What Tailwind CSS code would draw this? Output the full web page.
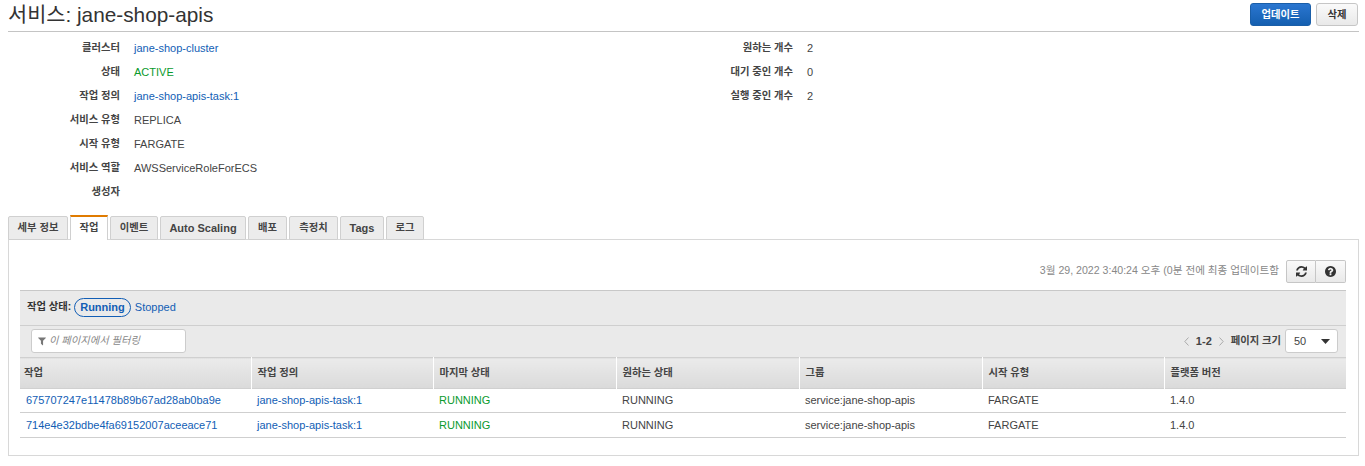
<!DOCTYPE html>
<html>
<head>
    <title>서비스: jane-shop-apis</title>
    <script src="https://cdn.jsdelivr.net/npm/@tailwindcss/browser@4"></script>
</head>
<body class="bg-white text-[#444] text-[11px] h-[466px] overflow-hidden font-['Liberation_Sans','Noto_Sans_CJK_KR',sans-serif]">
    <div class="pl-2 pr-[6px]">
        <!-- header -->
        <div class="h-[32px] flex items-center justify-between border-b border-[#c4c4c4]">
            <h1 class="text-[20.800px] leading-[30px] text-[#333] pb-[2px]">서비스: jane-shop-apis</h1>
            <div class="flex gap-[5px] pr-[1px] pb-[2px]">
                <button class="w-[61px] h-[23px] rounded-[3px] border border-[#1a5ea8] bg-gradient-to-b from-[#2a76d0] to-[#145fb0] text-white font-bold text-[10.300px]">업데이트</button>
                <button class="w-[42px] h-[23px] rounded-[3px] border border-[#c6c6c6] bg-gradient-to-b from-[#fafafa] to-[#e9e9e9] text-[#333] font-bold text-[10.300px]">삭제</button>
            </div>
        </div>

        <!-- service details -->
        <div class="grid grid-cols-[799px_1fr] pt-[4px] h-[183px]">
            <dl class="grid grid-cols-[112px_1fr] auto-rows-[24px] gap-x-[14px] items-center w-[500px]">
                <dt class="text-right font-bold text-[10.300px]">클러스터</dt><dd class="text-[#125eb5]">jane-shop-cluster</dd>
                <dt class="text-right font-bold text-[10.300px]">상태</dt><dd class="text-[#0a9a2d]">ACTIVE</dd>
                <dt class="text-right font-bold text-[10.300px]">작업 정의</dt><dd class="text-[#125eb5]">jane-shop-apis-task:1</dd>
                <dt class="text-right font-bold text-[10.300px]">서비스 유형</dt><dd>REPLICA</dd>
                <dt class="text-right font-bold text-[10.300px]">시작 유형</dt><dd>FARGATE</dd>
                <dt class="text-right font-bold text-[10.300px]">서비스 역할</dt><dd>AWSServiceRoleForECS</dd>
                <dt class="text-right font-bold text-[10.300px]">생성자</dt><dd></dd>
            </dl>
            <dl class="grid grid-cols-[86px_1fr] auto-rows-[24px] gap-x-[14px] items-center -ml-[100px] self-start">
                <dt class="text-right font-bold text-[10.300px] whitespace-nowrap">원하는 개수</dt><dd>2</dd>
                <dt class="text-right font-bold text-[10.300px] whitespace-nowrap">대기 중인 개수</dt><dd>0</dd>
                <dt class="text-right font-bold text-[10.300px] whitespace-nowrap">실행 중인 개수</dt><dd>2</dd>
            </dl>
        </div>

        <!-- tabs -->
        <div class="flex h-[25px] gap-[2px] items-end relative z-10 text-[10.300px] font-bold">
            <div class="w-[60px] h-[24px] flex items-center justify-center bg-[#ececec] border border-[#d0d0d0] rounded-t-[2px]">세부 정보</div>
            <div class="w-[38px] h-[25px] flex items-center justify-center bg-white border-x border-[#d0d0d0] border-t-2 border-t-[#e07b00] pb-[2px]">작업</div>
            <div class="w-[48px] h-[24px] flex items-center justify-center bg-[#ececec] border border-[#d0d0d0] rounded-t-[2px]">이벤트</div>
            <div class="w-[86px] h-[24px] flex items-center justify-center bg-[#ececec] border border-[#d0d0d0] rounded-t-[2px] text-[11px]">Auto Scaling</div>
            <div class="w-[39px] h-[24px] flex items-center justify-center bg-[#ececec] border border-[#d0d0d0] rounded-t-[2px]">배포</div>
            <div class="w-[49px] h-[24px] flex items-center justify-center bg-[#ececec] border border-[#d0d0d0] rounded-t-[2px]">측정치</div>
            <div class="w-[44px] h-[24px] flex items-center justify-center bg-[#ececec] border border-[#d0d0d0] rounded-t-[2px] text-[11px]">Tags</div>
            <div class="w-[38px] h-[24px] flex items-center justify-center bg-[#ececec] border border-[#d0d0d0] rounded-t-[2px]">로그</div>
        </div>

        <!-- panel -->
        <div class="h-[217px] -mt-px border border-[#d8d8d8] pl-[11px] pr-[12px]">
            <div class="h-[50px] flex items-center justify-end gap-[7px] pt-[12px]">
                <span class="text-[#888] text-[10.600px]">3월 29, 2022 3:40:24 오후 (0분 전에 최종 업데이트함</span>
                <div class="flex h-[23px]">
                    <button class="w-[30px] border border-[#c6c6c6] rounded-l-[2px] bg-gradient-to-b from-[#fafafa] to-[#e9e9e9] flex items-center justify-center">
                        <svg width="11" height="13" viewBox="0 0 1536 1792" fill="#333"><path d="M1511 1056q0 5-1 7-64 268-268 434.500t-478 166.500q-146 0-282.500-55t-243.500-157l-129 129q-19 19-45 19t-45-19-19-45v-448q0-26 19-45t45-19h448q26 0 45 19t19 45-19 45l-137 137q71 66 161 102t187 36q134 0 250-65t186-179q11-17 53-117 8-23 30-23h192q13 0 22.500 9.500t9.500 22.500zm25-800v448q0 26-19 45t-45 19h-448q-26 0-45-19t-19-45 19-45l138-138q-148-137-349-137-134 0-250 65t-186 179q-11 17-53 117-8 23-30 23h-199q-13 0-22.500-9.500t-9.500-22.500v-7q65-268 270-434.500t480-166.500q146 0 284 55.500t245 156.500l130-129q19-19 45-19t45 19 19 45z"/></svg>
                    </button>
                    <button class="w-[30px] border border-l-0 border-[#c6c6c6] rounded-r-[2px] bg-gradient-to-b from-[#fafafa] to-[#e9e9e9] flex items-center justify-center">
                        <svg width="11" height="13" viewBox="0 0 1536 1792" fill="#333"><path d="M896 1376v-192q0-14-9-23t-23-9h-192q-14 0-23 9t-9 23v192q0 14 9 23t23 9h192q14 0 23-9t9-23zm256-672q0-88-55.500-163t-138.500-116-170-41q-243 0-371 213-15 24 8 42l132 100q7 6 19 6 16 0 25-12 53-68 86-92 34-24 86-24 48 0 85.500 26t37.500 59q0 38-20 61t-68 45q-63 28-115.500 86.500t-52.500 125.500v36q0 14 9 23t23 9h192q14 0 23-9t9-23q0-19 21.500-49.500t54.500-49.500q32-18 49-28.500t46-35 44.500-48 28-60.500 12.500-81zm384 192q0 209-103 385.500t-279.500 279.500-385.500 103-385.500-103-279.500-279.500-103-385.500 103-385.500 279.500-279.500 385.500-103 385.500 103 279.500 279.500 103 385.500z"/></svg>
                    </button>
                </div>
            </div>

            <div class="bg-[#eaeaea] border-t border-[#c8c8c8]">
                <div class="h-[35px] flex items-center px-[7px] pb-[2px] border-b border-[#cfcfcf]">
                    <span class="font-bold text-[10.300px] text-[#333]">작업 상태:</span>
                    <span class="ml-[3px] h-[19px] px-[5px] flex items-center rounded-full border border-[#125eb5] text-[#125eb5] font-bold">Running</span>
                    <span class="ml-[4px] text-[#125eb5]">Stopped</span>
                </div>
                <div class="h-[31px] flex items-center justify-between pl-[11px] pr-[8px] pb-[1px]">
                    <div class="w-[155px] h-[24px] bg-white border border-[#ccc] rounded-[3px] flex items-center pl-[6px] gap-[3px] text-[#888] italic text-[10.300px]">
                        <svg width="8" height="10" viewBox="0 0 1408 1792" fill="#777"><path d="M1403 295q17 41-14 70l-493 493v742q0 42-39 59-13 5-25 5-27 0-45-19l-256-256q-19-19-19-45v-486l-493-493q-31-29-14-70 17-39 59-39h1280q42 0 59 39z"/></svg>
                        <span>이 페이지에서 필터링</span>
                    </div>
                    <div class="flex items-center">
                        <svg width="5" height="9" viewBox="0 0 5 9" fill="none" stroke="#aaa"><path d="M4.500 .5 .8 4.500l3.700 4"/></svg>
                        <span class="font-bold mx-[7px]">1-2</span>
                        <svg width="5" height="9" viewBox="0 0 5 9" fill="none" stroke="#aaa"><path d="M.5 .5l3.700 4-3.700 4"/></svg>
                        <span class="font-bold text-[10.300px] ml-[7px] mr-[4px]">페이지 크기</span>
                        <div class="w-[53px] h-[24px] bg-white border border-[#ccc] rounded-[3px] flex items-center justify-between pl-[8px] pr-[7px]">
                            <span>50</span>
                            <svg width="9" height="5" viewBox="0 0 9 5" fill="#333"><path d="M0 0h9L4.500 5z"/></svg>
                        </div>
                    </div>
                </div>
            </div>

            <table class="w-full table-fixed border-collapse">
                <thead>
                    <tr class="h-[31px] text-[10.300px] font-bold text-[#444] text-left border-y border-[#d0d0d0]">
                        <th class="w-[231px] pl-[4px] bg-gradient-to-b from-[#ebebeb] to-[#dadada] border-r border-white font-bold">작업</th>
                        <th class="w-[182px] pl-[6px] bg-gradient-to-b from-[#ebebeb] to-[#dadada] border-r border-white font-bold">작업 정의</th>
                        <th class="w-[183px] pl-[6px] bg-gradient-to-b from-[#ebebeb] to-[#dadada] border-r border-white font-bold">마지막 상태</th>
                        <th class="w-[183px] pl-[6px] bg-gradient-to-b from-[#ebebeb] to-[#dadada] border-r border-white font-bold">원하는 상태</th>
                        <th class="w-[183px] pl-[6px] bg-gradient-to-b from-[#ebebeb] to-[#dadada] border-r border-white font-bold">그룹</th>
                        <th class="w-[182px] pl-[6px] bg-gradient-to-b from-[#ebebeb] to-[#dadada] border-r border-white font-bold">시작 유형</th>
                        <th class="pl-[6px] bg-gradient-to-b from-[#ebebeb] to-[#dadada] font-bold">플랫폼 버전</th>
                    </tr>
                </thead>
                <tbody>
                    <tr class="h-[24px] border-b border-[#cfcfcf]">
                        <td class="pl-[6px] text-[#125eb5]">675707247e11478b89b67ad28ab0ba9e</td>
                        <td class="pl-[6px] text-[#125eb5]">jane-shop-apis-task:1</td>
                        <td class="pl-[6px] text-[#0a9a2d]">RUNNING</td>
                        <td class="pl-[6px]">RUNNING</td>
                        <td class="pl-[6px]">service:jane-shop-apis</td>
                        <td class="pl-[6px]">FARGATE</td>
                        <td class="pl-[6px]">1.4.0</td>
                    </tr>
                    <tr class="h-[25px] border-b border-[#cfcfcf]">
                        <td class="pl-[6px] text-[#125eb5]">714e4e32bdbe4fa69152007aceeace71</td>
                        <td class="pl-[6px] text-[#125eb5]">jane-shop-apis-task:1</td>
                        <td class="pl-[6px] text-[#0a9a2d]">RUNNING</td>
                        <td class="pl-[6px]">RUNNING</td>
                        <td class="pl-[6px]">service:jane-shop-apis</td>
                        <td class="pl-[6px]">FARGATE</td>
                        <td class="pl-[6px]">1.4.0</td>
                    </tr>
                </tbody>
            </table>
        </div>
    </div>
</body>
</html>
